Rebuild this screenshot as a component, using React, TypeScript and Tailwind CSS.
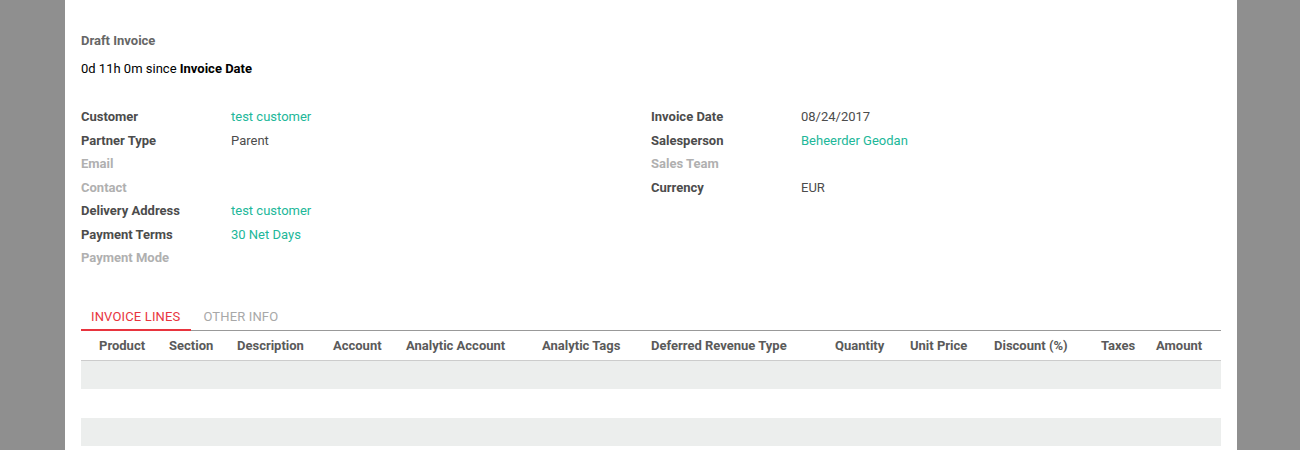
const FONT = { fontFamily: "Roboto, 'Liberation Sans', sans-serif" };

type Field = { label: string; value?: string; link?: boolean; muted?: boolean };

const left: Field[] = [
  { label: "Customer", value: "test customer", link: true },
  { label: "Partner Type", value: "Parent" },
  { label: "Email", muted: true },
  { label: "Contact", muted: true },
  { label: "Delivery Address", value: "test customer", link: true },
  { label: "Payment Terms", value: "30 Net Days", link: true },
  { label: "Payment Mode", muted: true },
];

const right: Field[] = [
  { label: "Invoice Date", value: "08/24/2017" },
  { label: "Salesperson", value: "Beheerder Geodan", link: true },
  { label: "Sales Team", muted: true },
  { label: "Currency", value: "EUR" },
];

const columns = [
  "Product",
  "Section",
  "Description",
  "Account",
  "Analytic Account",
  "Analytic Tags",
  "Deferred Revenue Type",
  "Quantity",
  "Unit Price",
  "Discount (%)",
  "Taxes",
  "Amount",
];

function FieldRow({ f }: { f: Field }) {
  return (
    <div className="flex h-[23.5px] items-center">
      <div
        className={`w-[150px] shrink-0 font-bold ${
          f.muted ? "text-[#b0b0b0]" : "text-[#4c4c4c]"
        }`}
      >
        {f.label}
      </div>
      {f.value && (
        <div className={f.link ? "text-[#21b799]" : "text-[#4c4c4c]"}>{f.value}</div>
      )}
    </div>
  );
}

export default function App() {
  return (
    <div className="h-[450px] overflow-hidden bg-[#8f8f8f] text-[13px]" style={FONT}>
      <div className="ml-[65px] h-full w-[1172px] bg-white px-4 pt-[32px]">
        <div className="h-[18px] leading-[18px] font-bold text-[#666666]">Draft Invoice</div>
        <div className="mt-[10px] h-[18px] leading-[18px] text-black">
          0d 11h 0m since <span className="font-bold">Invoice Date</span>
        </div>

        <div className="mt-[27px] flex">
          <div className="w-[570px]">
            {left.map((f) => (
              <FieldRow key={f.label} f={f} />
            ))}
          </div>
          <div className="flex-1">
            {right.map((f) => (
              <FieldRow key={f.label} f={f} />
            ))}
          </div>
        </div>

        <div className="mt-[38px] flex border-b border-[#999999]">
          <div className="-mb-px border-b-2 border-[#e8343e] pb-[3px] pl-[10px] pr-[11px] leading-[18px] tracking-[0.15px] text-[#e8343e]">
            INVOICE LINES
          </div>
          <div className="px-[12px] pb-[3px] leading-[18px] tracking-[0.15px] text-[#a8a8a8]">
            OTHER INFO
          </div>
        </div>

        <div className="grid h-[30px] grid-cols-[88px_68px_96px_73px_136px_109px_184px_75px_84px_107px_55px_1fr] items-center border-b border-[#cccccc] pt-[2px] font-bold text-[#5a5a5a]">
          {columns.map((c, i) => (
            <div key={c} className={i === 0 ? "pl-[18px]" : ""}>
              {c}
            </div>
          ))}
        </div>
        <div className="h-[28px] bg-[#eceeed]" />
        <div className="h-[29px] bg-white" />
        <div className="h-[28px] bg-[#eceeed]" />
      </div>
    </div>
  );
}
